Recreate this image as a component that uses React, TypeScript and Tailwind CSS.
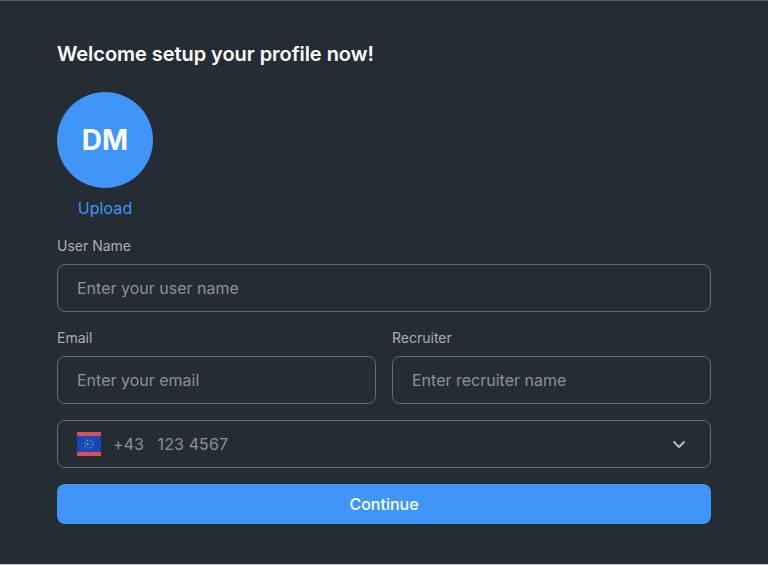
import React from "react";

type FieldProps = { label: string; placeholder: string };

function Field({ label, placeholder }: FieldProps) {
  return (
    <label className="flex min-w-0 flex-1 flex-col gap-2">
      <span className="text-sm leading-5 text-[#a9afb8]">{label}</span>
      <input
        type="text"
        placeholder={placeholder}
        className="h-12 w-full rounded-lg border border-[#656c75] bg-transparent px-[19px] text-base text-white outline-none placeholder:text-[#8b929c]"
      />
    </label>
  );
}

function Flag() {
  return (
    <svg width="24" height="24" viewBox="0 0 24 24" className="shrink-0">
      <rect width="24" height="24" fill="#d94f5c" />
      <rect y="4" width="24" height="16" fill="#1c43b8" />
      <circle cx="12" cy="12" r="4" fill="none" stroke="#45a898" strokeWidth="1.7" strokeDasharray="1.5 1.64" />
      <circle cx="10.8" cy="12" r="0.9" fill="#a4b5d5" />
      <circle cx="13.5" cy="12" r="0.6" fill="#3f86a5" />
    </svg>
  );
}

export default function App() {
  return (
    <main className="h-[565px] w-[768px] border-b border-t border-b-[#c8ccd1] border-t-[#596068] bg-[#252c33] px-[57px] pt-[39px] font-['Inter',sans-serif]">
      <h1 className="text-xl font-semibold leading-7 tracking-[-0.05px] text-white">Welcome setup your profile now!</h1>
      <div className="mt-6 flex w-24 flex-col items-center">
        <div className="flex size-24 items-center justify-center rounded-full bg-[#4095f8] text-[28px] font-bold leading-9 text-white">
          DM
        </div>
        <button className="mt-2 text-base leading-6 tracking-[0.1px] text-[#4095f8]">Upload</button>
      </div>
      <form className="mt-4 flex flex-col gap-4">
        <Field label="User Name" placeholder="Enter your user name" />
        <div className="flex gap-4">
          <Field label="Email" placeholder="Enter your email" />
          <Field label="Recruiter" placeholder="Enter recruiter name" />
        </div>
        <div className="flex h-12 items-center rounded-lg border border-[#656c75] px-[19px] text-base text-[#8b929c]">
          <Flag />
          <span className="ml-3 tracking-[0.1px]">+43</span>
          <span className="ml-[13.5px] tracking-[0.1px]">123 4567</span>
          <svg width="24" height="24" viewBox="0 0 24 24" className="ml-auto" fill="none" stroke="#b4bac2" strokeWidth="2">
            <path d="M6.5 9.5l5.5 5.5 5.5-5.5" />
          </svg>
        </div>
        <button type="button" className="h-10 rounded-lg bg-[#4095f8] text-base font-medium text-white">
          Continue
        </button>
      </form>
    </main>
  );
}
